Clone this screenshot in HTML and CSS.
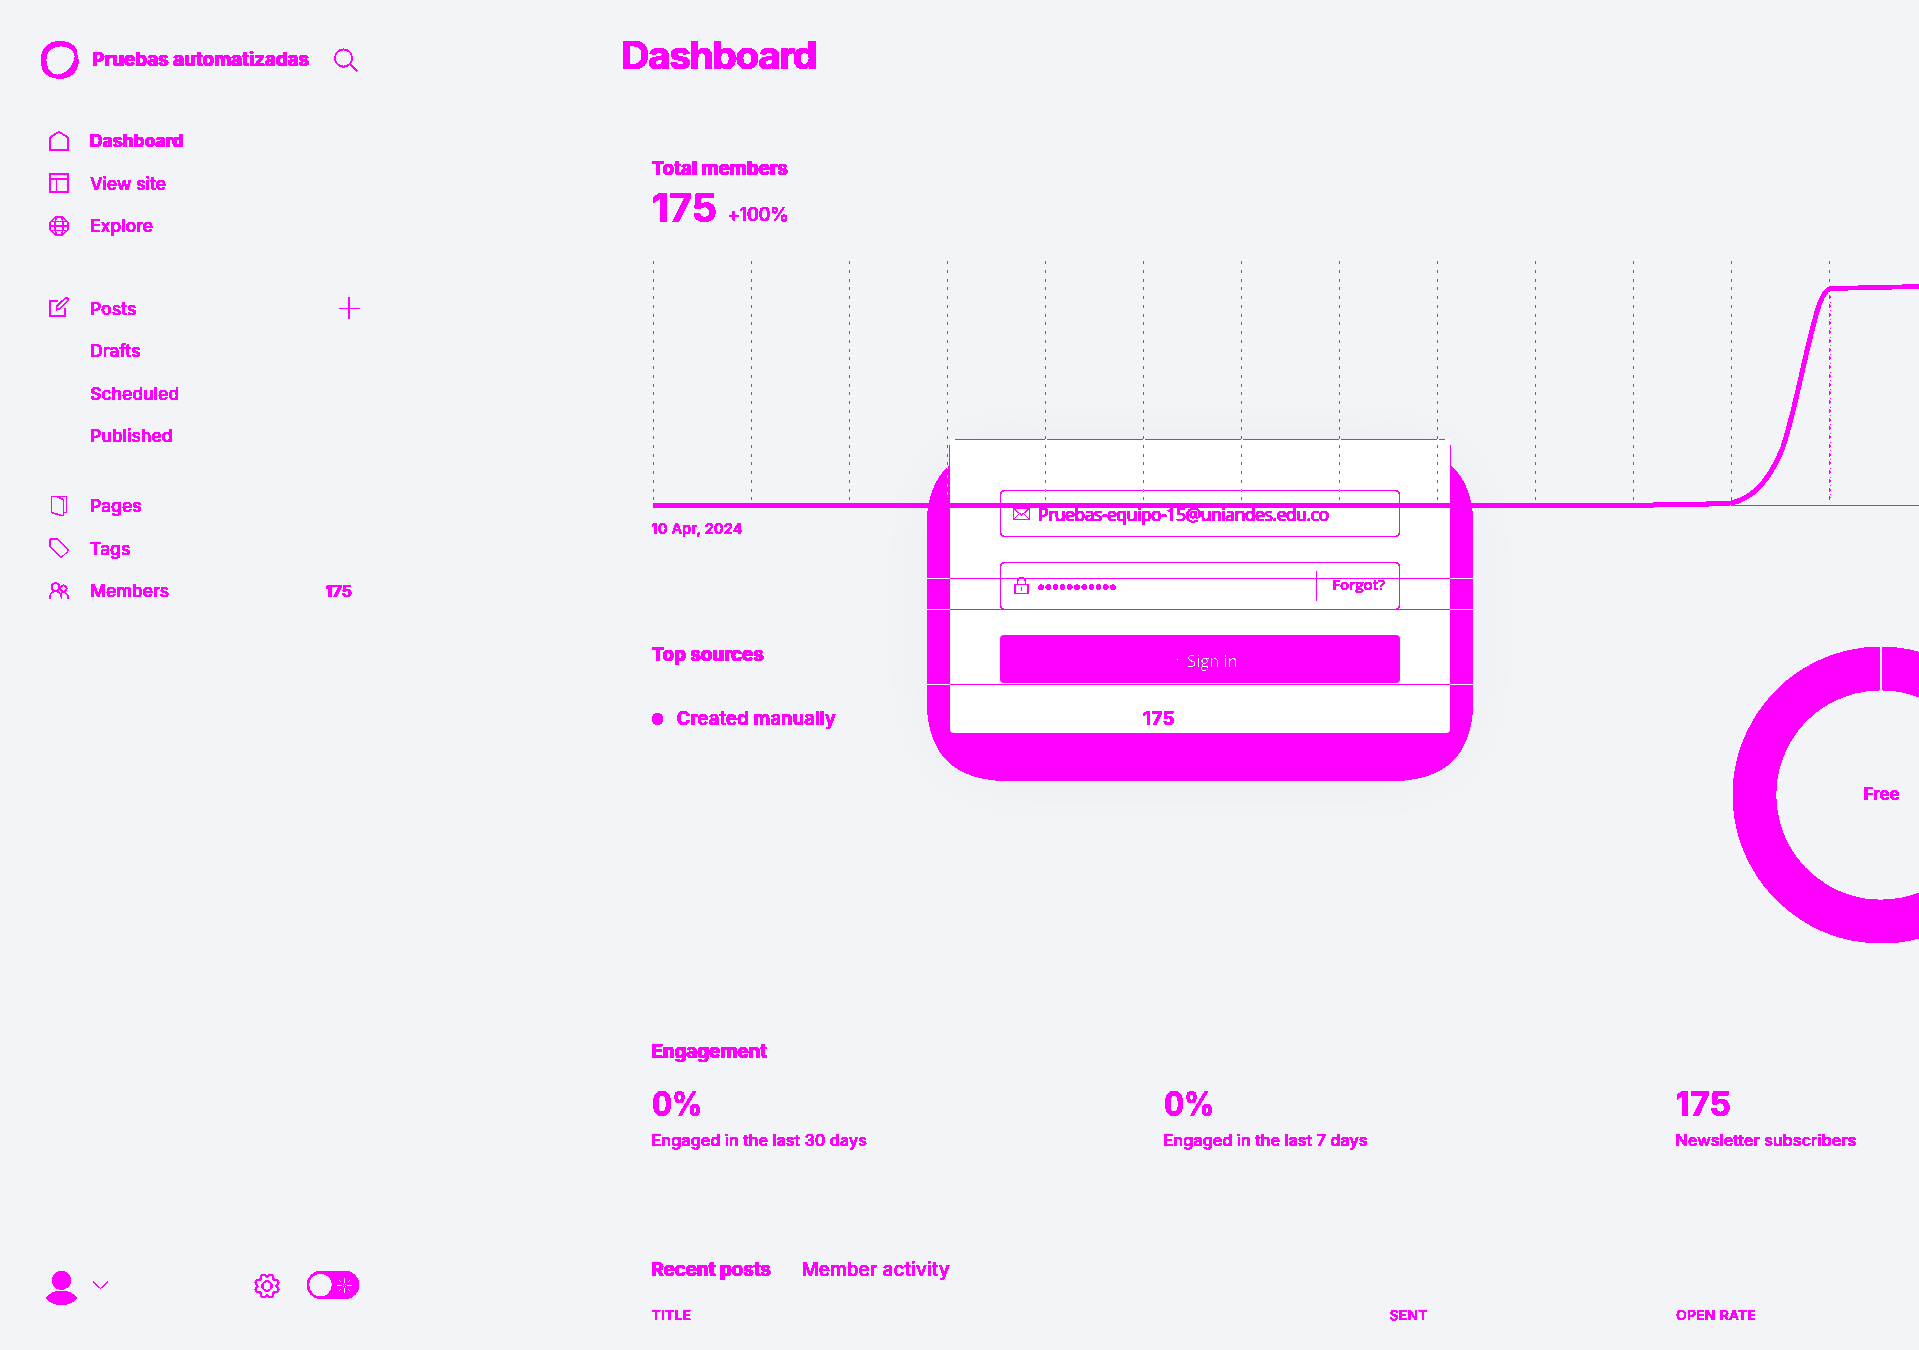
FILE: index.html
```html
<!DOCTYPE html>
<html lang="en">
<head>
<meta charset="utf-8">
<title>Dashboard</title>
<link rel="stylesheet" href="styles.css">
</head>
<body>
<svg class="defs" width="0" height="0" aria-hidden="true">
  <filter id="hard" x="0" y="0" width="100%" height="100%" color-interpolation-filters="sRGB"><feComponentTransfer><feFuncA type="discrete" tableValues="0 1 1 1 1 1 1 1 1"/></feComponentTransfer></filter>
  <filter id="thin" x="0" y="0" width="100%" height="100%" color-interpolation-filters="sRGB"><feComponentTransfer><feFuncA type="discrete" tableValues="0 0 0 0 0 1 1"/></feComponentTransfer></filter>
</svg>

<div class="signin">
  <div class="halo"></div>
  <svg class="shell" width="548" height="344" viewBox="926 438 548 344">
    <path class="fill" d="M949 466C935 478 927 500 927 524V698C927 753 952 781 1011 781H1389C1448 781 1473 753 1473 698V524C1473 500 1465 478 1451 466Z"/>
    <path class="white" d="M950 440H1450V729Q1450 733 1446 733H954Q950 733 950 729Z"/>
    <path class="rule" d="M955 439.500H1445M949.500 445V467M1450.500 445V467"/>
    <path class="white" d="M950 439h5v3h-5zM1445 439h5v3h-5z"/>
    <path class="rule" d="M950 578.500H1450M950 609.500H1450M950 684.500H1450"/>
    <path class="pale" d="M927 578.500H950M927 609.500H950M927 684.500H950M1450 578.500H1473M1450 609.500H1473M1450 684.500H1473"/>
  </svg>
  <form class="fields">
    <div class="field">
      <svg width="17" height="14" viewBox="0 0 17 14"><path d="M.5 1.500h16v11H.5zM1 2l7.500 6L16 2M1 12l5-5M16 12l-5-5"/></svg>
      <span class="email">Pruebas-equipo-15@uniandes.edu.co</span>
    </div>
    <div class="field second">
      <svg width="15" height="18" viewBox="0 0 15 18"><path d="M1 7.500h13v9H1zM3.500 7V4.500a4 4 0 0 1 8 0V7M7.500 10v4"/></svg>
      <svg class="dots" width="78" height="6" viewBox="0 0 78 6"><path d="M3 3h72"/></svg>
      <span class="forgot"><b>Forgot?</b></span>
    </div>
    <div class="button"><i></i><span>Sign in</span></div>
  </form>
</div>

<div class="app">
  <aside class="sidebar">
    <header class="brand">
      <svg width="40" height="40" viewBox="0 0 40 40"><path class="solid" fill-rule="evenodd" d="M14 2L21 1L29 3C34 5 38 10 37 15C40 21 38 29 33 34C28 38 22 39 18 38.500C9 37 3 34 2 27C0 20 1 12 5 8C8 4 11 3 14 2ZM21 6C13 6 6 11 6 20C6 29 12 35 18 35C26 34 33 27 35 17C35 11 29 6 21 6Z"/></svg>
      <span class="name">Pruebas automatizadas</span>
      <svg class="search" width="24" height="24" viewBox="0 0 24 24"><circle cx="9.500" cy="10" r="8.600"/><path d="M15.500 16L23 23"/></svg>
    </header>
    <nav>
      <a class="row active"><svg viewBox="0 0 20 20"><path d="M1 6.500L10 .8L19 6.500V19H1Z"/></svg><span>Dashboard</span></a>
      <a class="row"><svg viewBox="0 0 20 20"><path d="M1 1h18v18H1zM1 6h18M7.500 6v13"/></svg><span>View site</span></a>
      <a class="row"><svg class="globe" viewBox="0 0 20 20"><path d="M10 .7a9.300 9.300 0 1 0 0 18.600a9.300 9.300 0 1 0 0-18.600M.7 10h18.600M2 5.500h16M2 14.500h16M8 1C5 6 5 14 8 19M12 1c3 5 3 13 0 18"/></svg><span>Explore</span></a>
    </nav>
    <nav class="posts">
      <a class="row"><svg class="raise" viewBox="0 0 20 20"><path d="M9 4H1v15h15v-8M7.500 12.500V9.500L16 1.500Q18 .5 19 1.500Q19.500 3 18.500 4L10.500 12Z"/></svg><span>Posts</span><svg class="plus" viewBox="0 0 21 22"><path d="M10 0V22M0 11.500H21"/></svg></a>
      <a class="row sub"><span>Drafts</span></a>
      <a class="row sub"><span>Scheduled</span></a>
      <a class="row sub"><span>Published</span></a>
    </nav>
    <nav class="more">
      <a class="row"><svg class="thin" viewBox="0 0 20 20"><path d="M2.500 .5h15v16h-3M2.500 .5V16.500L12.500 19.500H14.500V3.500L8 1"/></svg><span>Pages</span></a>
      <a class="row"><svg class="thin" viewBox="0 0 20 20"><path d="M.7 1.500L1.500 .7H8.500L19.300 11.500V13L12.500 19.300H11.500L.7 8.500Z"/></svg><span>Tags</span></a>
      <a class="row"><svg class="thin" viewBox="0 0 20 20"><circle cx="6.500" cy="6" r="4"/><circle cx="14.500" cy="7.500" r="3.200"/><path d="M.8 18V16C1.500 8.500 11.500 8.500 12.500 16V18M12 12C16 9.500 19.200 13 19.200 17v1"/></svg><span>Members</span><b class="count">175</b></a>
    </nav>
    <footer class="tools">
      <svg width="32" height="36" viewBox="0 0 32 36"><circle class="solid" cx="15.500" cy="10.300" r="9.300"/><path class="solid" d="M.5 28C6 18.500 25 18.500 30.500 28C26 37 5 37 .5 28Z"/></svg>
      <svg class="chev" width="16" height="9" viewBox="0 0 16 9"><path d="M.5 1L7.500 7.500L14.500 1"/></svg>
      <svg class="gear" width="26" height="26" viewBox="0 0 26 26"><path d="M10 1.500L13 3.500L16 1.500L18.800 2.700L19.500 6.300L23.300 7.200L24.500 10L22.500 13L24.500 16L23.300 18.800L19.500 19.700L18.800 23.300L16 24.500L13 22.500L10 24.500L7.200 23.300L6.500 19.700L2.700 18.800L1.500 16L3.500 13L1.500 10L2.700 7.200L6.500 6.300L7.200 2.700Z"/><circle cx="13" cy="13" r="4.700"/></svg>
      <svg class="toggle" width="52" height="28" viewBox="0 0 52 28"><path class="solid" fill-rule="evenodd" d="M14 .1H38A13.900 13.900 0 0 1 38 27.900H14A13.900 13.900 0 0 1 14 .1ZM13.500 2.500A11.500 11.500 0 1 0 13.500 25.500A11.500 11.500 0 1 0 13.500 2.500Z"/><path class="sun" d="M37.500 7v5M37.500 17v5M30 14.500h5M40 14.500h5M32 9.500h1M33 10.500h1M42 9.500h1M41 10.500h1M32 19.500h1M33 18.500h1M42 19.500h1M41 18.500h1M36 13.500h1M38 13.500h1M36 15.500h1M38 15.500h1"/></svg>
    </footer>
  </aside>

  <main class="main">
    <h1>Dashboard</h1>
    <section class="members">
      <h2>Total members</h2>
      <div class="total"><b>175</b><span>+100%</span></div>
      <svg class="chart" width="1268" height="250" viewBox="652 260 1268 250">
        <path class="grid" d="M653.500 261V500M751.500 261V500M849.500 261V500M947.500 261V500M1045.500 261V500M1143.500 261V500M1241.500 261V500M1339.500 261V500M1437.500 261V500M1535.500 261V500M1633.500 261V500M1731.500 261V500M1829.500 261V282"/>
        <path class="grid fine" d="M1829.500 295V500"/>
        <path class="grid finer" d="M1830.500 296V498"/>
        <path class="grid pale" d="M947.500 466V500"/>
        <path class="cross" d="M1045 439.500h1.500M1143 439.500h1.500M1241 439.500h1.500M1339 439.500h1.500M1437 439.500h1.500M1045 490.500h1M1143 490.500h1M1241 490.500h1M1339 490.500h1"/>
        <path class="base" d="M1731 505.500H1920"/>
        <path class="curve" d="M653 505.500H1635C1665 504.500 1690 503.800 1722 503.800C1754 503.800 1772 475 1783 447C1797 404 1806 346 1819 305Q1825 289 1831 288.500L1920 286.500"/>
      </svg>
      <div class="date">10 Apr, 2024</div>
    </section>
    <section class="sources">
      <div class="list">
        <h2>Top sources</h2>
        <div class="source"><i></i><span>Created manually</span><b>175</b></div>
      </div>
      <div class="donut"><svg width="296" height="296" viewBox="0 0 296 296"><path class="ring" d="M148 21.500a126.500 126.500 0 1 0 .01 0"/><path class="slit" d="M148 0V43"/></svg><span>Free</span></div>
    </section>
    <section class="engagement">
      <h2>Engagement</h2>
      <div class="stats">
        <div><b class="percent">0%</b><span>Engaged in the last 30 days</span></div>
        <div><b class="percent">0%</b><span>Engaged in the last 7 days</span></div>
        <div><b>175</b><span>Newsletter subscribers</span></div>
      </div>
    </section>
    <section class="recent">
      <div class="tabs"><b>Recent posts</b><span>Member activity</span></div>
      <div class="head"><span>TITLE</span><span>SENT</span><span>OPEN RATE</span></div>
    </section>
  </main>
</div>
</body>
</html>
```
FILE: styles.css
```css
* { box-sizing: border-box; }
body {
  --ink: #ff00ff;
  --bg: #f3f4f8;
  margin: 0;
  width: 1919px;
  height: 1350px;
  overflow: hidden;
  position: relative;
  background: var(--bg);
  color: var(--ink);
  font-family: Inter, sans-serif;
  font-size: 17.500px;
  white-space: nowrap;
}
.defs { position: absolute; }
svg { display: block; flex: none; fill: none; stroke: var(--ink); stroke-width: 1.2; }
.solid { fill: var(--ink); stroke: none; }
h1, h2 { margin: 0; }

.app { display: flex; width: 1919px; height: 1350px; overflow: hidden; position: relative; filter: url(#hard); text-shadow: .2px 0 0 var(--ink); }
.brand .name, .row.active, h1, h2, .tabs b { text-shadow: .35px 0 0 var(--ink), -.35px 0 0 var(--ink); }

/* sidebar */
.sidebar { width: 400px; flex: none; height: 1350px; display: flex; flex-direction: column; padding-top: 40px; font-weight: 500; }
.brand { display: flex; align-items: center; height: 40px; padding-left: 40px; margin-bottom: 39.500px; }
.brand .name { font-size: 18.750px; font-weight: 700; letter-spacing: .03px; width: 216px; margin-left: 12.500px; line-height: 40px; height: 40px; }
.brand .search { margin-left: 25.500px; }
.row { display: flex; align-items: center; height: 42.500px; padding-left: 49px; width: 360px; }
.row svg { width: 20px; height: 20px; margin-right: 21px; }
.row .globe { stroke-width: 1; }
.row .thin { stroke-width: 1; }
.row .raise { margin-top: -3px; }
.row.sub { padding-left: 90px; }
.row.active { font-weight: 700; }
.row .plus { width: 21px; height: 22px; margin: 0 0 0 auto; stroke-width: 1; }
.count { margin-left: auto; margin-right: 8px; font-size: 16.250px; font-weight: 700; }
.posts { margin-top: 40px; }
.more { margin-top: 27.500px; }
.tools { display: flex; margin-top: auto; height: 80px; padding-left: 46px; }
.chev { margin: 11px 0 0 15px; stroke-width: .8; }
.gear { margin: 2.500px 0 0 145px; stroke-width: 1.500; }
.toggle { margin: 1px 0 0 27px; }
.sun { stroke: var(--bg); stroke-width: 1; shape-rendering: crispEdges; }

/* main column */
.main { width: 1519px; flex: none; padding: 30px 0 0 221.500px; }
h1 { font-size: 38.750px; line-height: 49px; font-weight: 700; height: 51px; letter-spacing: -1.350px; }
section { padding-left: 30px; }
h2 { font-size: 18.750px; line-height: 24px; font-weight: 700; }
.members { padding-top: 76px; }
.total { display: flex; height: 50px; line-height: 50px; margin-top: 2px; }
.total b { font-size: 40px; font-weight: 700; width: 76px; }
.total span { font-size: 18.750px; font-weight: 500; letter-spacing: -.5px; padding-top: 7px; }
.chart { margin: 27px 0 0 .5px; }
.grid { stroke-width: 1; stroke-dasharray: 3 5.750; shape-rendering: crispEdges; }
.grid.fine { stroke-dasharray: 4 4.750; }
.grid.finer { stroke-dasharray: 2 3.500 1 2.250; }
.grid.pale { stroke: var(--bg); }
.cross { stroke: #fff; stroke-width: 1; }
.base { stroke-width: 1; shape-rendering: crispEdges; }
.curve { stroke-width: 4.2; }
.date { font-size: 15px; line-height: 20px; font-weight: 500; margin-top: 9px; }
.sources { display: flex; margin-top: 104px; height: 301px; }
.list { width: 1081.500px; flex: none; }
.source { display: flex; align-items: center; margin-top: 39px; height: 24px; font-size: 18.750px; font-weight: 600; }
.source i { width: 11px; height: 12px; border-radius: 50%; background: var(--ink); margin: 2px 14px 0 0; }
.source span { width: 466.500px; }
.source b { font-weight: 700; letter-spacing: .4px; }
.donut { display: grid; flex: none; width: 296px; height: 296px; margin-top: 4px; }
.donut > * { grid-area: 1 / 1; }
.donut span { place-self: center; font-size: 17px; font-weight: 600; padding: 0 0 3px 1px; }
.ring { stroke-width: 43; }
.slit { stroke: var(--bg); stroke-width: 2; }
.engagement { margin-top: 96px; }
.stats { display: grid; grid-template-columns: 512px 512px 512px; margin-top: 20px; }
.stats div { display: flex; flex-direction: column; }
.stats b { font-size: 33.750px; line-height: 40px; font-weight: 700; }
.stats .percent { transform: scaleX(.88); transform-origin: left; }
.stats span { font-size: 16.250px; line-height: 20px; margin-top: 6px; font-weight: 500; letter-spacing: .04px; }
.recent { margin-top: 108px; }
.tabs { display: flex; font-size: 18.750px; line-height: 24px; }
.tabs b { font-weight: 700; width: 150px; }
.tabs span { font-weight: 500; letter-spacing: .2px; }
.head { display: grid; grid-template-columns: 738px 286.500px 200px; font-size: 13.750px; line-height: 20px; font-weight: 500; margin-top: 23px; letter-spacing: .4px; }

/* sign-in card floating in the middle of the page */
.signin { position: absolute; left: 926px; top: 438px; width: 548px; height: 344px; font-family: "Open Sans", sans-serif; }
.halo { position: absolute; inset: 3px 1px 1px; border-radius: 82px; box-shadow: 0 0 60px rgba(40, 50, 60, .035); }
.shell { position: absolute; left: 0; top: 0; filter: url(#hard); }
.shell .fill { fill: var(--ink); stroke: none; }
.shell .white { fill: #fff; stroke: none; }
.shell .rule { stroke-width: 1; shape-rendering: crispEdges; }
.shell .pale { stroke: var(--bg); stroke-width: 1; shape-rendering: crispEdges; }
.fields { position: relative; margin: 52px 0 0 74px; width: 400px; }
.field { display: flex; align-items: center; height: 47px; border: 1px solid var(--ink); border-radius: 4px; padding-left: 12px; filter: url(#hard); }
.field svg { stroke-width: 1; }
.field .email { font-size: 17.500px; letter-spacing: -.450px; margin-left: 8px; margin-top: 1px; text-shadow: .35px 0 0 var(--ink), -.35px 0 0 var(--ink); }
.second { margin-top: 25px; height: 48px; padding-left: 13px; }
.field .dots { margin: 2px 0 0 9px; stroke-width: 5; stroke-linecap: round; stroke-dasharray: .1 7.090; }
.forgot { margin-left: auto; height: 30px; border-left: 1px solid var(--ink); padding: 0 14px 0 15px; font-size: 15px; line-height: 26px; }
.forgot b { font-weight: 600; letter-spacing: -.150px; }
.button { display: flex; height: 48px; margin-top: 25px; border-radius: 4px; background: var(--ink); color: var(--bg); font-size: 16.500px; line-height: 52px; padding-left: 177px; }
.button i { width: 1px; height: 1px; background: var(--bg); margin: 24px 9px 0 0; }
.button span { filter: url(#thin); }
```
